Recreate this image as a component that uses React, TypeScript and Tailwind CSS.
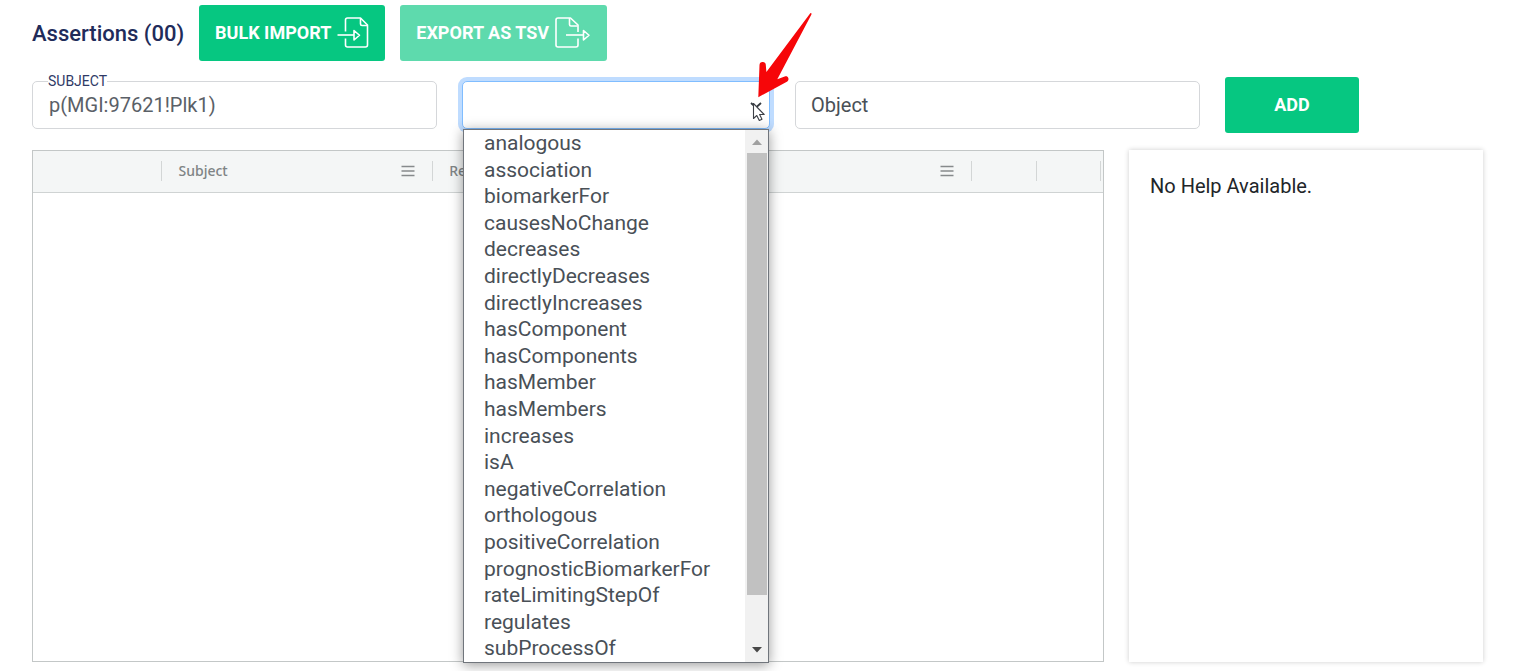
import React, { useState } from "react";

const relations = [
  "analogous",
  "association",
  "biomarkerFor",
  "causesNoChange",
  "decreases",
  "directlyDecreases",
  "directlyIncreases",
  "hasComponent",
  "hasComponents",
  "hasMember",
  "hasMembers",
  "increases",
  "isA",
  "negativeCorrelation",
  "orthologous",
  "positiveCorrelation",
  "prognosticBiomarkerFor",
  "rateLimitingStepOf",
  "regulates",
  "subProcessOf",
];

function ImportIcon() {
  return (
    <svg aria-hidden="true" className="h-8 w-8" viewBox="0 0 32 32" fill="none" stroke="currentColor" strokeWidth="1.6" strokeLinejoin="round">
      <path d="M8.5 14.5V3a2 2 0 0 1 2-2h13l7 7v20a2 2 0 0 1-2 2h-18a2 2 0 0 1-2-2v-6.500" />
      <path d="M23.500 1v6a1.500 1.500 0 0 0 1.500 1.500h5.500" />
      <path d="M0.500 18H17" />
      <path d="M17 13.500v9.500l5.500-4.750z" />
    </svg>
  );
}

function ExportIcon() {
  return (
    <svg aria-hidden="true" className="h-8 w-9" viewBox="0 0 36 32" fill="none" stroke="currentColor" strokeWidth="1.6" strokeLinejoin="round">
      <path d="M23 15V8l-7.500-7H3a2 2 0 0 0-2 2v25a2 2 0 0 0 2 2h18a2 2 0 0 0 2-2v-6.500" />
      <path d="M14.500 1v6.500A1.500 1.500 0 0 0 16 9h6.500" />
      <path d="M11 18h17.500" />
      <path d="M28.500 13.500v9.500l5.500-4.750z" />
    </svg>
  );
}

function MenuLines() {
  return (
    <svg aria-hidden="true" className="h-3 w-3.5" viewBox="0 0 14 12" stroke="#868a8c" strokeWidth="1.4">
      <path d="M0.500 1.500h13M0.500 6h13M0.500 10.500h13" />
    </svg>
  );
}

function HeaderCell({ title }: { title?: string }) {
  return (
    <th scope="col" className="p-0 font-medium last:pr-0.5">
      <div className="flex h-5 items-center justify-between border-r border-[#d3d6d6] pr-[17px] pl-4">
        <span>{title}</span>
        {title && <MenuLines />}
      </div>
    </th>
  );
}

function RelationMenu() {
  return (
    <div className="absolute top-full left-px z-10 flex w-[306px] border border-[#70757c] bg-white shadow-[0_2px_12px_rgba(0,0,0,0.4)]">
      <ul role="listbox" aria-label="Relation options" className="grid h-[532px] flex-1 auto-rows-fr text-[21px] leading-[26px] text-[#495057]">
        {relations.map((name) => (
          <li key={name} role="option" aria-selected="false" className="pl-5">
            {name}
          </li>
        ))}
      </ul>
      <div className="flex w-[23px] flex-col items-center bg-[#f1f1f1]">
        <svg aria-hidden="true" className="h-[23px] w-[10px]" viewBox="0 0 10 23">
          <path d="M0 15l5-5.500 5 5.500z" fill="#a0a0a0" />
        </svg>
        <div className="h-[442px] w-5 bg-[#c1c1c1]" />
        <svg aria-hidden="true" className="mt-auto h-6 w-[10px]" viewBox="0 0 10 24">
          <path d="M0 9l5 5.500 5-5.500z" fill="#484848" />
        </svg>
      </div>
    </div>
  );
}

function Pointer() {
  return (
    <svg aria-hidden="true" className="pointer-events-none absolute right-1 bottom-2 z-20 h-5 w-4" viewBox="0 0 16 20">
      <path d="M1 2l5 4.500L11 2" fill="none" stroke="#343a40" strokeWidth="1.800" />
      <path d="M3.500 2.500v15l3.300-3 2.500 5 2.700-1.300-2.400-4.700h4.600z" fill="#fff" stroke="#3c3f46" strokeWidth="1.100" strokeLinejoin="round" />
    </svg>
  );
}

function RedArrow() {
  return (
    <svg aria-hidden="true" className="pointer-events-none absolute -top-[69px] left-[293px] z-20 h-[88px] w-[60px]" viewBox="0 0 60 88">
      <path
        d="M56.200 1.200c.5.300.4.900.1 1.500L22.300 67.300l7.400-2.700c1.800-.600 3.100 0 3.600 1.500.500 1.600-.1 3-1.900 3.900L3.300 85.200 4.500 53c.1-2.200 1.300-3.200 3.300-3.100 2 .1 3 1.200 3 3.200l.6 6.800L54.900 1.800c.4-.600.800-.900 1.300-.6z"
        fill="#f60609"
      />
    </svg>
  );
}

export default function App() {
  const [subject, setSubject] = useState("p(MGI:97621!Plk1)");
  const [object, setObject] = useState("");

  return (
    <main className="min-h-screen bg-white pt-[5px] pr-[30px] pb-2 pl-8 font-['Roboto',sans-serif]">
      <header className="flex items-center gap-[15px]">
        <h1 className="text-[22px] font-medium text-[#212b5a]">Assertions (00)</h1>
        <button type="button" className="flex h-14 items-center gap-1.5 rounded-[3px] bg-[#06c781] px-4 text-lg font-bold text-white">
          BULK IMPORT
          <ImportIcon />
        </button>
        <button type="button" disabled className="flex h-14 items-center gap-1.5 rounded-[3px] bg-[#5edaad] px-4 text-lg font-bold text-white">
          EXPORT AS TSV
          <ExportIcon />
        </button>
      </header>

      <form className="mt-4 grid grid-cols-[405fr_308fr_405fr_134fr_99fr] items-center gap-[25px]" onSubmit={(e) => e.preventDefault()}>
        <div className="relative">
          <label htmlFor="subject" className="absolute -top-2 left-4 bg-white text-sm leading-4 text-[#2f3a66]">
            SUBJECT
          </label>
          <input
            id="subject"
            value={subject}
            onChange={(e) => setSubject(e.target.value)}
            className="block h-12 w-full rounded-[5px] border border-[#d5d7da] px-4 text-xl text-[#5a6067] outline-none"
          />
        </div>

        <div className="relative">
          <select
            aria-label="Relation"
            defaultValue=""
            className="block h-12 w-full appearance-none rounded-[5px] border border-[#80bdff] bg-white px-4 text-xl text-[#495057] shadow-[0_0_0_4px_#bfdcff] outline-none"
          >
            <option value="" />
            {relations.map((name) => (
              <option key={name} value={name}>
                {name}
              </option>
            ))}
          </select>
          <RelationMenu />
          <Pointer />
          <RedArrow />
        </div>

        <input
          aria-label="Object"
          placeholder="Object"
          value={object}
          onChange={(e) => setObject(e.target.value)}
          className="block h-12 w-full rounded-[5px] border border-[#d5d7da] px-[15px] text-xl text-[#495057] outline-none placeholder:text-[#495057]"
        />

        <button type="submit" className="h-14 rounded-[3px] bg-[#06c781] text-lg font-bold text-white">
          ADD
        </button>
      </form>

      <div className="mt-[17px] grid min-h-[512px] grid-cols-[1072fr_354fr] gap-[25px]">
        <section className="border border-[#c3c7c7]">
          <table className="w-full table-fixed border-collapse text-left font-['Noto_Sans',sans-serif] text-sm text-[#7f8485]">
            <colgroup>
              <col className="w-[12.1%]" />
              <col className="w-[25.3%]" />
              <col className="w-[25.2%]" />
              <col className="w-[25.2%]" />
              <col className="w-[6%]" />
              <col className="w-[6.2%]" />
            </colgroup>
            <thead>
              <tr className="h-[41px] border-b border-[#cfd3d3] bg-[#f4f6f6]">
                <HeaderCell />
                <HeaderCell title="Subject" />
                <HeaderCell title="Relation" />
                <HeaderCell title="Object" />
                <HeaderCell />
                <HeaderCell />
              </tr>
            </thead>
          </table>
        </section>
        <aside className="bg-white px-[21px] py-[22px] text-xl text-[#212529] shadow-[0_0_5px_rgba(0,0,0,0.2)]">
          No Help Available.
        </aside>
      </div>
    </main>
  );
}
